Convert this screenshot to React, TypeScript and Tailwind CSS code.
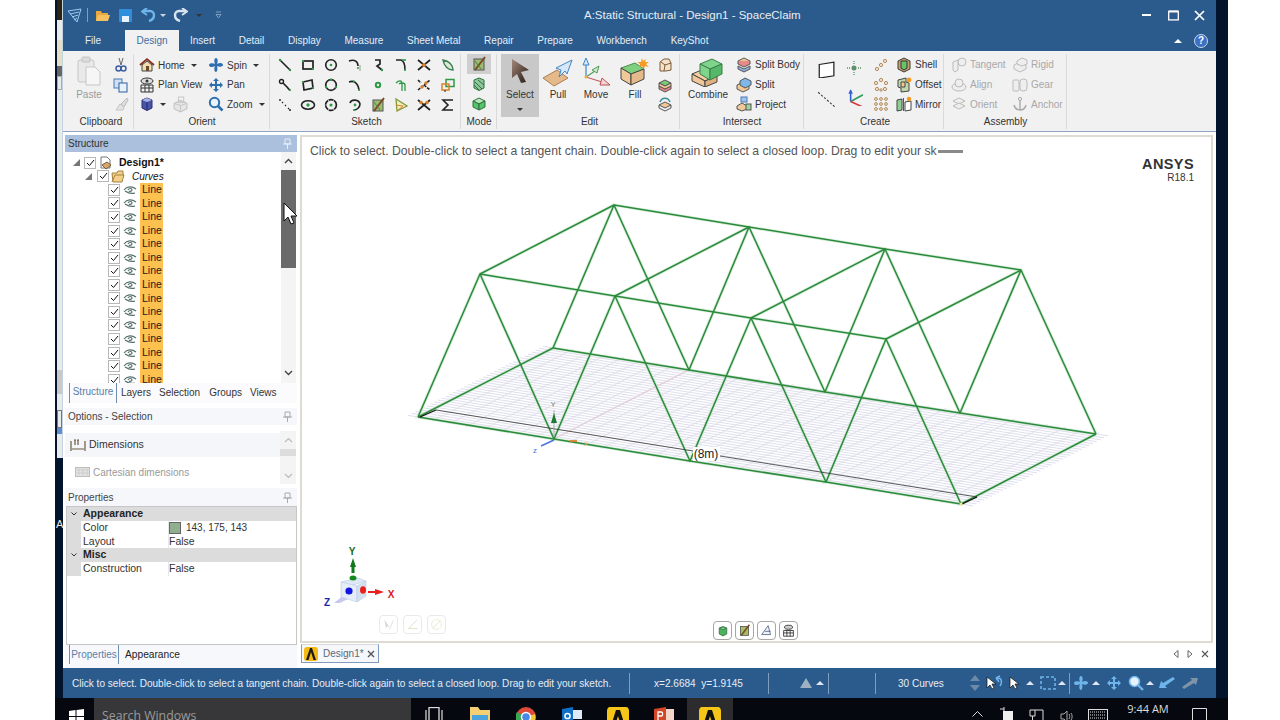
import React from 'react';

const K = '#222';
const G = '#2f9a46';
const O = '#d9822b';

const Ico: React.FC<{ s?: number; className?: string; children: React.ReactNode }> = ({ s = 16, className, children }) => (
  <svg width={s} height={s} viewBox="0 0 16 16" fill="none" className={`shrink-0 ${className ?? ''}`}>{children}</svg>
);

const CaretDown: React.FC<{ className?: string }> = ({ className }) => (
  <span className={`inline-block w-0 h-0 border-x-[3px] border-x-transparent border-t-[3px] border-t-[#333] ${className ?? ''}`} />
);

const CaretUp: React.FC<{ className?: string }> = ({ className }) => (
  <span className={`inline-block w-0 h-0 border-x-[4px] border-x-transparent border-b-[4px] border-b-[#dfe8f2] ${className ?? ''}`} />
);

const Group: React.FC<{ label: string; className: string; labelClass?: string; children: React.ReactNode }> = ({ label, className, labelClass, children }) => (
  <div className={`relative flex flex-col h-full shrink-0 ${className}`}>
    <div className="flex-1 min-h-0 flex pt-[1px]">{children}</div>
    <div className={`h-[17px] text-center text-[10px] leading-[16px] text-[#333] ${labelClass ?? ''}`}>{label}</div>
    <div className="absolute right-0 top-[3px] bottom-[2px] w-px bg-[#dadada]" />
  </div>
);

const sketchIcons: React.ReactNode[] = [
  <><path d="M3 3L13 13" stroke={K} strokeWidth="1.6" /><circle cx="3" cy="3" r="1.2" fill={G} /><circle cx="13" cy="13" r="1.2" fill={G} /></>,
  <><rect x="3" y="4" width="10" height="8" stroke={K} strokeWidth="1.7" /><rect x="2" y="3" width="2" height="2" fill={G} /><rect x="12" y="11" width="2" height="2" fill={G} /></>,
  <><circle cx="8" cy="8" r="5.3" stroke={K} strokeWidth="1.6" /><circle cx="8" cy="8" r="1.3" fill={G} /></>,
  <><path d="M2 4C7 2 11 4 11 9" stroke={K} strokeWidth="1.6" /><path d="M13 8V14" stroke="#999" /><circle cx="11" cy="11" r="1.1" fill={G} /></>,
  <><path d="M5 3H10V7L7 9L12 13" stroke={K} strokeWidth="1.7" /><circle cx="12" cy="13" r="1.2" fill={G} /></>,
  <><path d="M3 3H8C11 4 12 8 12 13" stroke={K} strokeWidth="1.5" /><path d="M9 3H13" stroke={G} strokeWidth="1.6" /><circle cx="12" cy="13" r="1.1" fill={G} /></>,
  <><path d="M2 3L14 13M2 13L14 3" stroke={K} strokeWidth="1.7" /><circle cx="8" cy="8" r="2" fill={O} /></>,
  <><path d="M3 3C4 9 8 13 13 13C13 8 9 4 3 3Z" stroke="#3f7f52" strokeWidth="1.5" fill="#dbe9d8" /></>,
  <><circle cx="4.5" cy="4.5" r="2" stroke={K} strokeWidth="1.4" /><path d="M6 6L10 10C12 12 12 13 13 13" stroke={K} strokeWidth="1.7" /><circle cx="13" cy="13" r="1.1" fill={G} /></>,
  <><path d="M3 5L12 3L13 11L4 13Z" stroke={K} strokeWidth="1.7" /><circle cx="3" cy="5" r="1.1" fill={G} /><circle cx="13" cy="11" r="1.1" fill={G} /></>,
  <><circle cx="8" cy="8" r="5.3" stroke={K} strokeWidth="1.7" /><circle cx="8" cy="2.7" r="1.2" fill={G} /><circle cx="3" cy="10" r="1.2" fill={G} /><circle cx="13" cy="10" r="1.2" fill={G} /></>,
  <><path d="M2 5C7 3 11 6 12 13" stroke={K} strokeWidth="1.7" /><circle cx="7" cy="4.5" r="1.1" fill={G} /><circle cx="12" cy="13" r="1.1" fill={G} /></>,
  <><circle cx="8" cy="8" r="2.2" stroke={G} strokeWidth="2" /></>,
  <><path d="M3 6C6 3 9 3 9 7V14M6 7C7 6 12 5 12 8V14" stroke={G} strokeWidth="1.3" /></>,
  <><path d="M2 3L5 6M8 8L14 13M2 13L14 3" stroke={K} strokeWidth="1.6" strokeDasharray="3 1" /><circle cx="6" cy="10" r="1.7" fill={O} /><circle cx="10" cy="6" r="1.7" fill={O} /></>,
  <><rect x="6" y="2.5" width="8" height="7" stroke={G} strokeWidth="1.5" /><rect x="2" y="7" width="7" height="6" stroke={O} strokeWidth="1.5" /><path d="M5 13V15" stroke={K} /></>,
  <><circle cx="3" cy="3" r=".9" fill={K} /><path d="M5 5L6 6M8 8L9 9M11 11L12 12" stroke={K} strokeWidth="1.2" /><circle cx="13" cy="13" r="1" fill={K} /></>,
  <><ellipse cx="8" cy="8" rx="6.5" ry="4.2" stroke={K} strokeWidth="1.6" /><circle cx="8" cy="8" r="1.7" fill={G} /></>,
  <><circle cx="8" cy="8" r="5.4" stroke={K} strokeWidth="1.7" strokeDasharray="5 .6" /><circle cx="8" cy="8" r="1.6" fill={G} /></>,
  <><path d="M3 6C4 2 12 2 13 7C13 11 9 13 7 13" stroke={K} strokeWidth="1.6" /><circle cx="8" cy="8" r="1.4" fill={G} /><circle cx="7" cy="13" r="1" fill={G} /></>,
  <><rect x="3" y="3" width="10" height="11" fill="#9bbd73" stroke="#555" /><path d="M14 1L4 14" stroke="#7a4a26" strokeWidth="2" /><path d="M4 5L10 13" stroke="#5c7c40" /></>,
  <><path d="M3 2L14 9L4 14Z" stroke="#7f9a3a" strokeWidth="1.3" fill="#f4edc2" /><path d="M3 8L10 9L4 14" stroke={O} /></>,
  <><path d="M2 3L14 13M2 13L14 3" stroke={K} strokeWidth="1.7" /><circle cx="5" cy="5.5" r="1.8" fill={O} /><circle cx="11" cy="5.5" r="1.8" fill={O} /></>,
  <><path d="M13 3H3L8 8L3 13H13" stroke={K} strokeWidth="1.6" /></>,
];

const Paste = () => (
  <svg width="24" height="30" viewBox="0 0 24 30" fill="none">
    <rect x="1" y="4" width="16" height="22" rx="2" fill="#e9e9e9" stroke="#c6c6c6" />
    <rect x="5" y="1" width="8" height="5" rx="1" fill="#dcdcdc" stroke="#c2c2c2" />
    <path d="M9 11H18L23 16V29H9Z" fill="#f6f6f6" stroke="#c6c6c6" />
  </svg>
);

const SelectArrow = () => (
  <svg width="24" height="26" viewBox="0 0 24 26">
    <defs>
      <linearGradient id="selArrow" x1="0" y1="0" x2="1" y2="1">
        <stop offset="0" stopColor="#a4887a" />
        <stop offset="1" stopColor="#241812" />
      </linearGradient>
    </defs>
    <path d="M4 1L21 12L13 14L18 24L13 25L9 16L4 20Z" fill="url(#selArrow)" />
  </svg>
);

const PullIcon = () => (
  <svg width="32" height="28" viewBox="0 0 32 28" fill="none">
    <path d="M1 19L15 11L26 19L12 27Z" fill="#e6b98a" stroke="#a97d52" />
    <path d="M30 1L14 9L19 11L17 18L23 12L25 15Z" fill="#d7e7f7" stroke="#3f86c8" />
  </svg>
);

const MoveIcon = () => (
  <svg width="32" height="30" viewBox="0 0 32 30" fill="none">
    <path d="M6 20V5" stroke="#3f86c8" strokeWidth="1.2" />
    <path d="M6 1L9 8H3Z" fill="#d7e7f7" stroke="#3f86c8" />
    <path d="M6 20L18 12" stroke="#4d9d58" strokeWidth="1.2" />
    <path d="M19 9L17 16L12 13Z" fill="#cfe9cf" stroke="#4d9d58" />
    <path d="M6 20L22 25" stroke="#c05050" />
    <path d="M30 28L20 28L22 21Z" fill="#f4d5d5" stroke="#c05050" />
    <circle cx="6" cy="20" r="1.6" fill="#e8b04a" />
  </svg>
);

const FillIcon = () => (
  <svg width="30" height="28" viewBox="0 0 30 28" fill="none">
    <path d="M1 10L15 5L24 11L11 16Z" fill="#7fcf7f" stroke="#4d8c4d" />
    <path d="M1 10V21L11 27V16Z" fill="#f0c898" stroke="#444" />
    <path d="M11 16V27L24 21V11Z" fill="#e6b98a" stroke="#444" />
    <path d="M22 0L23 3L26 1L25 4L29 4L26 6L29 9L25 8L24 11L22 8L19 9L20 6L17 4L21 4Z" fill="#f59a23" />
  </svg>
);

const CombineIcon = () => (
  <svg width="34" height="30" viewBox="0 0 34 30" fill="none">
    <path d="M1 17L13 12L26 19L14 24Z" fill="#f2cda2" stroke="#444" />
    <path d="M1 17V24L14 30V24Z" fill="#f0c898" stroke="#444" />
    <path d="M14 24V30L26 25V19Z" fill="#e0b080" stroke="#444" />
    <path d="M9 7L21 2L31 7L19 12Z" fill="#7fd48c" stroke="#3e7d4a" />
    <path d="M9 7V17L19 23V12Z" fill="#7fd48c" stroke="#3e7d4a" />
    <path d="M19 12V23L31 17V7Z" fill="#55b869" stroke="#3e7d4a" />
  </svg>
);

const SmallText: React.FC<{ icon: React.ReactNode; label: string; muted?: boolean; className?: string }> = ({ icon, label, muted, className }) => (
  <div className={`h-5 flex items-center ${className ?? ''}`}>
    <span className="w-[16px] h-[16px] flex items-center justify-center shrink-0">{icon}</span>
    <span className={`ml-[3px] text-[10px] whitespace-nowrap ${muted ? 'text-[#a8a8a8]' : 'text-[#333]'}`}>{label}</span>
  </div>
);

const Box = (top: string, side: string, stroke = '#444') => (
  <Ico>
    <path d="M2 5L8 2L14 5L8 8Z" fill={top} stroke={stroke} />
    <path d="M2 5V11L8 14V8Z" fill={side} stroke={stroke} />
    <path d="M8 8V14L14 11V5Z" fill={side} stroke={stroke} />
  </Ico>
);

const Ribbon = () => (
  <div className="h-[81px] bg-[#f1f1f1] flex border-b border-b-[#8ea5c3] shrink-0">
    <Group label="Clipboard" className="w-[71px]" labelClass="pl-[5px]">
      <div className="w-[50px] flex flex-col items-center pt-[4px] pl-[2px]">
        <Paste />
        <span className="mt-[1px] text-[10px] text-[#9a9a9a]">Paste</span>
      </div>
      <div className="flex flex-col pt-[3px]">
        <div className="h-5 flex items-center"><Ico><path d="M6 1L8 8M10 1L8 8" stroke="#666" /><circle cx="5.5" cy="11.5" r="2.5" stroke="#3b5fa0" strokeWidth="1.5" /><circle cx="10.5" cy="11.5" r="2.5" stroke="#3b5fa0" strokeWidth="1.5" /></Ico></div>
        <div className="h-5 flex items-center"><Ico><rect x="1" y="2" width="8" height="9" fill="#cfe0f5" stroke="#4d79b5" /><rect x="6" y="6" width="8" height="9" fill="#e8f0fa" stroke="#2f5f9f" /></Ico></div>
        <div className="h-5 flex items-center"><Ico><path d="M14 2L8 8L11 11L15 4Z" fill="#ddd" stroke="#bbb" /><path d="M7 8L3 14H10L11 11Z" fill="#e3e3e3" stroke="#c4c4c4" /></Ico></div>
      </div>
    </Group>
    <Group label="Orient" className="w-[136px]">
      <div className="w-[74px] pl-[5px] pt-[3px] flex flex-col">
        <div className="flex items-center"><SmallText label="Home" icon={<Ico><path d="M1 8L8 2L15 8" stroke="#8a2f1e" strokeWidth="1.7" /><path d="M3 8V14H13V8L8 4Z" fill="#f3ddb0" stroke="#444" /><rect x="7" y="9" width="3" height="5" fill="#6b4a2a" /></Ico>} /><CaretDown className="ml-[6px]" /></div>
        <SmallText label="Plan View" icon={<Ico><ellipse cx="8" cy="4" rx="6" ry="3" fill="#dcdcdc" stroke="#333" /><circle cx="8" cy="4" r="1.5" fill="#333" /><path d="M2 8H14V15H2ZM2 11H14M6 8V15M10 8V15" stroke="#333" /></Ico>} />
        <div className="h-5 flex items-center">
          <Ico><path d="M3 4L8 2L13 4V12L8 14.5L3 12Z" fill="#4a55a8" stroke="#2a2f70" /><path d="M3 4L8 6L13 4L8 2Z" fill="#a8b3e8" /><path d="M8 6V14" stroke="#222a66" /></Ico>
          <CaretDown className="ml-[5px]" />
          <Ico s={17} className="ml-[6px]"><path d="M2 7L8 4L14 7V12L8 15L2 12Z" fill="#e6e6e6" stroke="#c2c2c2" /><path d="M6 1H11V6H6Z" stroke="#c8c8c8" /><path d="M8 9V15M2 7L8 9L14 7" stroke="#c8c8c8" /></Ico>
        </div>
      </div>
      <div className="pt-[3px] flex flex-col">
        <div className="flex items-center"><SmallText label="Spin" icon={<Ico><path d="M8 1C10 1 10 5 9 7C12 5 15 6 15 8C15 10 11 10 9 9C10 12 9 15 8 15C6 15 6 11 7 9C4 11 1 10 1 8C1 6 5 6 7 7C6 5 6 1 8 1Z" fill="#2f6fb0" /></Ico>} /><CaretDown className="ml-[6px]" /></div>
        <SmallText label="Pan" icon={<Ico><path d="M8 1L11 4H9V7H12V5L15 8L12 11V9H9V12H11L8 15L5 12H7V9H4V11L1 8L4 5V7H7V4H5Z" fill="#2f6fb0" /></Ico>} />
        <div className="flex items-center"><SmallText label="Zoom" icon={<Ico><circle cx="6.5" cy="6.5" r="4.7" fill="#e9f3fc" stroke="#2f6fb0" strokeWidth="2" /><path d="M10 10L14.5 14.5" stroke="#2f6fb0" strokeWidth="2.6" /></Ico>} /><CaretDown className="ml-[6px]" /></div>
      </div>
    </Group>
    <Group label="Sketch" className="w-[191px]" labelClass="pl-[2px]">
      <div className="pl-[3px] pt-[3px] grid grid-cols-[repeat(8,23.3px)] grid-rows-[repeat(3,20px)]">
        {sketchIcons.map((ic, i) => (
          <span key={i} className="flex items-center justify-center"><Ico>{ic}</Ico></span>
        ))}
      </div>
    </Group>
    <Group label="Mode" className="w-[36px]">
      <div className="w-full flex flex-col items-center pt-[2px]">
        <div className="h-5 w-6 bg-[#cfcfcf] flex items-center justify-center"><Ico>{sketchIcons[20]}</Ico></div>
        <div className="h-5 flex items-center"><Ico><path d="M3 4L8 2L13 4V12L8 14.5L3 12Z" fill="#8fc79a" stroke="#2f6f42" /><path d="M4 6L11 13M7 4L13 9M3 9L8 14" stroke="#2f6f42" /></Ico></div>
        <div className="h-5 flex items-center">{Box('#b6e6b6', '#55c46a', '#2f6f42')}</div>
      </div>
    </Group>
    <Group label="Edit" className="w-[183px]" labelClass="pl-[2px]">
      <div className="ml-[4px] mt-[2px] w-[38px] h-[63px] bg-[#c8c8c8] flex flex-col items-center pt-[4px]">
        <SelectArrow />
        <span className="mt-[3px] text-[10px] text-[#333]">Select</span>
        <CaretDown className="mt-[6px]" />
      </div>
      <div className="w-[38px] flex flex-col items-center pt-[7px]">
        <PullIcon />
        <span className="mt-[0px] text-[10px] text-[#333]">Pull</span>
      </div>
      <div className="w-[38px] flex flex-col items-center pt-[5px]">
        <MoveIcon />
        <span className="mt-[0px] text-[10px] text-[#333]">Move</span>
      </div>
      <div className="w-[40px] flex flex-col items-center pt-[6px]">
        <FillIcon />
        <span className="mt-[1px] text-[10px] text-[#333]">Fill</span>
      </div>
      <div className="ml-[2px] pt-[3px] flex flex-col">
        <div className="h-5 flex items-center"><Ico><path d="M3 5L7 2H12L14 6V13L9 14H3Z" fill="#f4e2c8" stroke="#7a5a3a" /><path d="M8 8L7 14M8 8L14 6M8 8L4 5" stroke="#7a5a3a" /></Ico></div>
        <div className="h-5 flex items-center"><Ico><path d="M2 6L8 3L14 6L8 9Z" fill="#79c979" stroke="#555" /><path d="M2 9L8 12L14 9V12L8 15L2 12Z" fill="#e98a8a" stroke="#555" /><path d="M2 6V9L8 12L14 9V6L8 9Z" fill="#f0c898" stroke="#555" /></Ico></div>
        <div className="h-5 flex items-center"><Ico><path d="M2 9L8 6L14 9L8 12Z" fill="#f0c898" stroke="#555" /><path d="M2 9V12L8 15L14 12V9" stroke="#555" /><path d="M3 6C5 1 11 1 13 6" stroke="#3d8f9a" strokeWidth="1.6" /></Ico></div>
      </div>
    </Group>
    <Group label="Intersect" className="w-[124px]">
      <div className="w-[54px] flex flex-col items-center pt-[5px] pl-[2px]">
        <CombineIcon />
        <span className="text-[10px] text-[#333]">Combine</span>
      </div>
      <div className="pl-[2px] pt-[3px] flex flex-col">
        <SmallText label="Split Body" icon={<Ico><path d="M2 4L8 1L14 4L8 7Z" fill="#f0c898" stroke="#555" /><path d="M2 4V7L8 10L14 7V4" fill="#e98a8a" stroke="#555" /><path d="M2 9L8 12L14 9V12L8 15L2 12Z" fill="#8fb0dd" stroke="#555" /></Ico>} />
        <SmallText label="Split" icon={<Ico><path d="M1 8L7 5L13 8V12L7 15L1 12Z" fill="#f0c898" stroke="#555" /><path d="M4 4L9 1L15 4L15 8L9 11L4 8Z" fill="#7fb8e8" stroke="#555" /></Ico>} />
        <SmallText label="Project" icon={<Ico><path d="M1 10L6 7L11 10V13L6 15L1 13Z" fill="#f0c898" stroke="#555" /><rect x="5" y="1" width="6" height="5" fill="#9ec4ec" stroke="#4d79b5" /><rect x="10" y="8" width="5" height="6" fill="#9fd49f" stroke="#555" /></Ico>} />
      </div>
    </Group>
    <Group label="Create" className="w-[140px]" labelClass="pl-[2px]">
      <div className="w-[40px] flex flex-col items-center pt-[8px] pl-[4px]">
        <Ico s={18}><path d="M2 4L15 2V14L2 16Z" fill="#fff" stroke="#222" strokeWidth="1.1" /></Ico>
        <Ico s={18} className="mt-[12px]"><path d="M1 2L17 16" stroke="#444" strokeWidth="1" strokeDasharray="2 1.5" /></Ico>
      </div>
      <div className="w-[20px] flex flex-col items-center pt-[8px]">
        <Ico><circle cx="8" cy="8" r="2.5" fill="#5d8f6a" /><path d="M8 1V4M8 12V15M1 8H4M12 8H15" stroke="#5d8f6a" strokeWidth="1.3" strokeDasharray="1 1" /></Ico>
        <Ico s={18} className="mt-[12px]"><path d="M5 12V2" stroke="#2f5fd0" strokeWidth="1.4" /><path d="M5 1L7 5H3Z" fill="#2f5fd0" /><path d="M5 12L16 6" stroke="#2f9a5c" strokeWidth="1.4" /><path d="M5 12L16 17" stroke="#d03a3a" strokeWidth="1.4" /></Ico>
      </div>
      <div className="w-[32px] flex flex-col items-center pt-[3px] pl-[1px]">
        <div className="h-5 flex items-center"><Ico><g stroke="#b08a5e" fill="#f4ead8"><circle cx="4" cy="12" r="1.6" /><circle cx="8" cy="8" r="1.6" /><circle cx="12" cy="4" r="1.6" /></g></Ico></div>
        <div className="h-5 flex items-center"><Ico><g stroke="#b08a5e" fill="#f4ead8"><circle cx="8" cy="3" r="1.6" /><circle cx="3" cy="6" r="1.6" /><circle cx="13" cy="6" r="1.6" /><circle cx="4" cy="12" r="1.6" /><circle cx="12" cy="12" r="1.6" /><circle cx="8" cy="13" r="1.2" /></g></Ico></div>
        <div className="h-5 flex items-center"><Ico><g stroke="#b08a5e" fill="#f4ead8"><circle cx="3" cy="3" r="1.4" /><circle cx="8" cy="3" r="1.4" /><circle cx="13" cy="3" r="1.4" /><circle cx="3" cy="8" r="1.4" /><circle cx="8" cy="8" r="1.4" /><circle cx="13" cy="8" r="1.4" /><circle cx="3" cy="13" r="1.4" /><circle cx="8" cy="13" r="1.4" /><circle cx="13" cy="13" r="1.4" /></g></Ico></div>
      </div>
      <div className="pt-[3px] flex flex-col">
        <SmallText label="Shell" icon={<Ico><path d="M2 4L8 1L14 4V12L8 15L2 12Z" fill="#c9a26a" stroke="#3a3a3a" /><path d="M5 4H11V11L8 13L5 11Z" fill="#66c46a" stroke="#333" /></Ico>} />
        <SmallText label="Offset" icon={<Ico><path d="M2 3L10 1V5L13 6V14L5 15V11L2 10Z" fill="#c2d8a8" stroke="#444" /><path d="M5 5H9V10H5Z" fill="#f0c898" stroke="#444" /><circle cx="13" cy="3" r="2.4" fill="#f59a23" /></Ico>} />
        <SmallText label="Mirror" icon={<Ico><path d="M1 4L6 3V14L1 15Z" fill="#8fcf8f" stroke="#444" /><path d="M9 6L15 5V14L9 15Z" fill="#fff" stroke="#444" /><path d="M7.5 2V15" stroke="#555" /><circle cx="13" cy="3" r="2.2" fill="#f59a23" /></Ico>} />
      </div>
    </Group>
    <Group label="Assembly" className="w-[123px]">
      <div className="w-[68px] pl-[7px] pt-[3px] flex flex-col">
        <SmallText muted label="Tangent" icon={<Ico><circle cx="11" cy="5" r="4" stroke="#bbb" fill="#eee" /><path d="M2 5L7 3V13L4 15L2 13Z" fill="#eee" stroke="#bbb" /></Ico>} />
        <SmallText muted label="Align" icon={<Ico><ellipse cx="8" cy="10" rx="7" ry="4" fill="#eee" stroke="#bbb" /><ellipse cx="8" cy="6" rx="4" ry="4" fill="#eee" stroke="#bbb" /></Ico>} />
        <SmallText muted label="Orient" icon={<Ico><path d="M2 5L8 2L14 5L8 8Z" fill="#eee" stroke="#bbb" /><path d="M2 10L8 7L14 10L8 13Z" fill="#eee" stroke="#bbb" /></Ico>} />
      </div>
      <div className="pt-[3px] flex flex-col">
        <SmallText muted label="Rigid" icon={<Ico><path d="M2 8L8 5L14 8V12L8 15L2 12Z" fill="#eee" stroke="#bbb" /><path d="M5 4L10 1L15 3V7L10 9L5 7Z" fill="#eee" stroke="#bbb" /></Ico>} />
        <SmallText muted label="Gear" icon={<Ico><rect x="1" y="3" width="6" height="11" rx="1" fill="#eee" stroke="#bbb" /><rect x="8" y="2" width="7" height="12" rx="3" fill="#eee" stroke="#bbb" /></Ico>} />
        <SmallText muted label="Anchor" icon={<Ico><circle cx="8" cy="3" r="1.6" stroke="#aaa" /><path d="M8 5V14M2 9C3 13 6 14 8 14C10 14 13 13 14 9" stroke="#aaa" strokeWidth="1.4" /></Ico>} />
      </div>
    </Group>
  </div>
);

const Check: React.FC<{ className?: string }> = ({ className }) => (
  <span className={`w-[12px] h-[12px] border border-[#b8b8b8] bg-white flex items-center justify-center shrink-0 ${className ?? ''}`}>
    <svg width="9" height="8" viewBox="0 0 9 8" fill="none"><path d="M1 4L3.5 6.5L8 1" stroke="#111" strokeWidth="1" /></svg>
  </span>
);

const TreeTri: React.FC<{ className?: string }> = ({ className }) => (
  <svg width="7" height="7" viewBox="0 0 7 7" className={`shrink-0 ${className ?? ''}`}><path d="M7 0V7H0Z" fill="#777" /></svg>
);

const Pin = () => (
  <svg width="9" height="11" viewBox="0 0 9 11" fill="none" className="shrink-0"><path d="M2 1H7V6H2ZM0 6H9M4.5 6V11" stroke="currentColor" /></svg>
);

const Eye = () => (
  <svg width="14" height="10" viewBox="0 0 14 10" fill="none" className="shrink-0"><path d="M1 5C4 1 9 1 13 4M2 6C5 8 9 9 12 8" stroke="#55706c" strokeWidth="1.2" /><path d="M5 5C6 3 9 3 9 5C9 6 7 7 6 6" stroke="#55706c" strokeWidth="1.2" /></svg>
);

const Tree = () => (
  <div className="h-[231px] flex bg-white">
    <div className="flex-1 overflow-hidden pt-[4px]">
      <div className="h-[13.5px] flex items-center pl-[8px]">
        <TreeTri />
        <Check className="ml-[4px]" />
        <svg width="14" height="14" viewBox="0 0 14 14" fill="none" className="ml-[3px] shrink-0"><path d="M2 1H8L11 4V12H2Z" fill="#fff" stroke="#777" /><path d="M3 9L8 6L12 9L7 13Z" fill="#d9a86c" stroke="#7a5a3a" /></svg>
        <span className="ml-[6px] text-[10.5px] font-bold text-[#111]">Design1*</span>
      </div>
      <div className="h-[13.57px] flex items-center pl-[20px]">
        <TreeTri />
        <Check className="ml-[5px]" />
        <svg width="14" height="13" viewBox="0 0 14 13" fill="none" className="ml-[2px] shrink-0"><path d="M1 3H6L7 1H12V5H13L11 12H2Z" fill="#f4cf8c" stroke="#a5843f" /><path d="M1 12L4 5H13" stroke="#a5843f" /></svg>
        <span className="ml-[7px] text-[10px] italic text-[#111]">Curves</span>
      </div>
      {Array.from({ length: 15 }).map((_, i) => (
        <div key={i} className="h-[13.57px] flex items-center pl-[43px]">
          <Check />
          <span className="ml-[3px]"><Eye /></span>
          <span className="ml-[3px] w-[23px] h-full bg-[#fcc14f] pl-[2px] text-[10.5px] leading-[13.5px] text-[#222]">Line</span>
        </div>
      ))}
    </div>
    <div className="w-[15px] mr-[1px] flex flex-col bg-[#f4f4f4] shrink-0">
      <div className="h-[18px] flex items-center justify-center">
        <svg width="9" height="6" viewBox="0 0 9 6" fill="none"><path d="M1 5L4.5 1.5L8 5" stroke="#444" strokeWidth="1.4" /></svg>
      </div>
      <div className="h-[98px] bg-[#6a6a6a]" />
      <div className="flex-1" />
      <div className="h-[18px] mb-[1px] flex items-center justify-center">
        <svg width="9" height="6" viewBox="0 0 9 6" fill="none"><path d="M1 1L4.5 4.5L8 1" stroke="#444" strokeWidth="1.4" /></svg>
      </div>
    </div>
  </div>
);

const PropHead: React.FC<{ label: string }> = ({ label }) => (
  <div className="h-[14px] bg-[#dcdcdc] flex items-center font-bold text-[#222]">
    <svg width="6" height="4" viewBox="0 0 6 4" fill="none" className="ml-[4px]"><path d="M.5 .5L3 3L5.5 .5" stroke="#333" /></svg>
    <span className="ml-[6px]">{label}</span>
  </div>
);

const PropRow: React.FC<{ name: string; value: React.ReactNode }> = ({ name, value }) => (
  <div className="h-[13.5px] flex leading-[13px]">
    <span className="w-[14px] h-full bg-[#dcdcdc]" />
    <span className="w-[88px] pl-[2px] border-r border-r-[#e8e8e8] h-full">{name}</span>
    <span className="h-full">{value}</span>
  </div>
);

const LeftPanel = () => (
  <div className="w-[232px] ml-[2px] mt-[3px] flex flex-col shrink-0 text-[10.5px] relative">
    <div className="h-[17px] bg-[#aac0dc] flex items-center justify-between px-[3px] text-[10px] text-[#333]">
      <span>Structure</span>
      <span className="text-[#e8eef6] mr-[2px]"><Pin /></span>
    </div>
    <Tree />
    <div className="h-[20px] flex items-center pl-[4px] bg-[#fbfbfd] text-[10px] text-[#333]">
      <span className="w-[48px] h-[20px] text-center leading-[18px] border-x border-x-[#6f8eae] text-[#5a80a8]">Structure</span>
      <span className="ml-[4px] -mt-[1px]">Layers</span>
      <span className="ml-[8px] -mt-[1px]">Selection</span>
      <span className="ml-[9px] -mt-[1px]">Groups</span>
      <span className="ml-[8px] -mt-[1px]">Views</span>
    </div>
    <div className="h-[85px] bg-white flex flex-col">
      <div className="mt-[5px] h-[17px] bg-[#f6f7fa] flex items-center justify-between pl-[3px] pr-[5px] text-[10px] text-[#444]">
        <span>Options - Selection</span>
        <span className="text-[#aaa]"><Pin /></span>
      </div>
      <div className="flex flex-1 min-h-0 mt-[6px]">
        <div className="flex-1">
          <div className="h-[24px] mt-[2px] bg-[#f5f6f9] flex items-center pl-[5px] text-[#333]">
            <svg width="16" height="14" viewBox="0 0 16 14" fill="none"><path d="M1 3V13M15 3V13M2 11H14M5 2V7M8 2V7M4 2H6M7 2H9" stroke="#6a5a40" strokeWidth="1.2" /></svg>
            <span className="ml-[3px]">Dimensions</span>
          </div>
          <div className="h-[24px] mt-[3px] flex items-center pl-[10px] text-[10px] text-[#9a9a9a]">
            <svg width="15" height="10" viewBox="0 0 15 10" fill="none"><rect x=".5" y=".5" width="14" height="9" fill="#e4e4e4" stroke="#bbb" /><path d="M0 3H15M0 6H15M4 0V10M8 0V10M12 0V10" stroke="#cdcdcd" /></svg>
            <span className="ml-[3px]">Cartesian dimensions</span>
          </div>
        </div>
        <div className="w-[16px] mr-[1px] mb-[4px] bg-[#f4f4f4] flex flex-col">
          <div className="h-[18px] flex items-center justify-center"><svg width="9" height="6" viewBox="0 0 9 6" fill="none"><path d="M1 5L4.5 1.5L8 5" stroke="#bbb" strokeWidth="1.2" /></svg></div>
          <div className="h-[7px] bg-[#dcdcdc]" />
          <div className="flex-1" />
          <div className="h-[16px] flex items-center justify-center"><svg width="9" height="6" viewBox="0 0 9 6" fill="none"><path d="M1 1L4.5 4.5L8 1" stroke="#bbb" strokeWidth="1.2" /></svg></div>
        </div>
      </div>
    </div>
    <div className="h-[18px] bg-[#f6f7fa] flex items-center justify-between pl-[3px] pr-[5px] text-[10px] text-[#444]">
      <span>Properties</span>
      <span className="text-[#aaa]"><Pin /></span>
    </div>
    <div className="h-[139px] border border-[#c6c6c6] ml-[1px] bg-white text-[#333]">
      <PropHead label="Appearance" />
      <PropRow name="Color" value={<span className="flex items-center h-full text-[10px]"><span className="w-[12px] h-[12px] bg-[#8faf8f] border border-[#666] mr-[5px]" />143, 175, 143</span>} />
      <PropRow name="Layout" value="False" />
      <PropHead label="Misc" />
      <PropRow name="Construction" value="False" />
    </div>
    <div className="h-[23px] flex items-start pl-[4px] bg-[#f7f8fc] text-[10.2px] text-[#333]">
      <span className="w-[50px] h-[19px] text-center text-[10px] leading-[19px] border-x border-x-[#6f8eae] text-[#5a80a8]">Properties</span>
      <span className="ml-[6px] leading-[19px] text-[#222]">Appearance</span>
    </div>
    {/* mouse pointer sitting on the tree scrollbar */}
    <svg width="16" height="24" viewBox="0 0 16 24" className="absolute left-[218px] top-[67px]">
      <path d="M1 1V19L5 15L8 22L11 21L8 14H14Z" fill="#fff" stroke="#111" />
    </svg>
  </div>
);

const topBack = [[614, 205], [749, 227], [885, 249], [1021, 270]];
const topFront = [[480, 274], [615, 296], [751, 318], [886, 339]];
const botBack = [[553, 348], [689, 370], [825, 392], [960, 413], [1096, 434]];
const botFront = [[418, 417], [554, 439], [690, 461], [826, 482], [961, 504]];

const poly = (p: number[][]) => p.map(q => q.join(',')).join(' ');
const weave = (bot: number[][], top: number[][]) => {
  const out: number[][] = [];
  bot.forEach((b, i) => {
    out.push(b);
    if (top[i]) out.push(top[i]);
  });
  return out;
};
const lerp = (a: number[], b: number[], t: number) => [a[0] + (b[0] - a[0]) * t, a[1] + (b[1] - a[1]) * t];

const Truss = () => {
  const A = [418, 417], B = [553, 348], C = [1096, 434], D = [961, 504];
  const long = Array.from({ length: 37 }, (_, i) => i / 36);
  const cross = Array.from({ length: 33 }, (_, i) => i / 32);
  const members: number[][][] = [
    topBack, topFront, botBack, botFront,
    weave(botFront, topFront), weave(botBack, topBack),
    [topFront[0], topBack[0]], [topFront[1], topBack[1]], [topFront[2], topBack[2]], [topFront[3], topBack[3]],
    [botFront[0], botBack[0]], [botFront[4], botBack[4]],
  ];
  return (
    <svg className="absolute inset-0" width="913" height="508" viewBox="300 135 913 508" fill="none">
      <g stroke="#d6d6ea" strokeWidth=".8">
        {long.map(t => {
          const p = lerp(A, B, t), q = lerp(D, C, t);
          return <line key={t} x1={p[0] - 10} y1={p[1] - 1.6} x2={q[0] + 12} y2={q[1] + 1.9} />;
        })}
      </g>
      <g stroke="#d8d9e2" strokeWidth=".7">
        {cross.map(t => {
          const p = lerp(A, D, t), q = lerp(B, C, t);
          return <line key={t} x1={p[0] - 3} y1={p[1] + 1.5} x2={q[0] + 3} y2={q[1] - 1.5} />;
        })}
      </g>
      <path d="M554 439L689 370" stroke="#e2c4c8" strokeWidth=".8" />
      <g strokeLinejoin="round">
        {members.map((m, i) => <polyline key={`h${i}`} points={poly(m)} stroke="#bfe3c4" strokeWidth="3.2" opacity=".6" />)}
        {members.map((m, i) => <polyline key={i} points={poly(m)} stroke="#2b8a3b" strokeWidth="1.5" />)}
      </g>
      <path d="M436 410L693 451M720 456L977 497" stroke="#333" strokeWidth=".8" />
      <path d="M420 417L436 410M962 504L977 497" stroke="#111" strokeWidth="1.3" />
      <path d="M554 410V437" stroke="#999" strokeWidth=".8" />
      <path d="M554 413L557 423H551Z" fill="#1f7a33" />
      <path d="M554 440L541 446" stroke="#4a78d8" strokeWidth="1.6" />
      <path d="M570 441H577" stroke="#d9822b" strokeWidth="1.8" />
      <circle cx="961" cy="504" r="1.6" fill="#f1e58a" />
      <text x="553" y="407" fontSize="7" textAnchor="middle" fill="#6a7a6a" fontFamily="Liberation Sans">Y</text>
      <text x="535" y="453" fontSize="8" textAnchor="middle" fill="#5a70c8" fontFamily="Liberation Sans">z</text>
      <text x="586" y="446" fontSize="7" textAnchor="middle" fill="#e3b18a" fontFamily="Liberation Sans">x</text>
      <rect x="693" y="447" width="27" height="14" fill="#fff" />
      <text x="706" y="458" fontSize="12" textAnchor="middle" fill="#222" fontFamily="Liberation Sans">(8m)</text>
      {/* triad */}
      <path d="M334 603L345 594L350 598L340 603Z" fill="#c9c8ee" />
      <path d="M341 582L358 578L366 581L350 586Z" fill="#dfe9f5" stroke="#b8cbe0" strokeWidth=".6" />
      <path d="M341 582V597L357 602V586Z" fill="#e4edf8" stroke="#b8cbe0" strokeWidth=".6" />
      <path d="M357 586L366 581V596L357 602Z" fill="#d2e0f0" stroke="#b8cbe0" strokeWidth=".6" />
      <ellipse cx="353" cy="578" rx="3.5" ry="2.5" fill="#138a20" />
      <circle cx="349" cy="591" r="3.6" fill="#1414e0" />
      <ellipse cx="363" cy="590" rx="3" ry="3.8" fill="#e8201c" />
      <path d="M353 558L356 567H354.5V573H351.5V567H350Z" fill="#0f7a1c" />
      <path d="M384 592L375 589V591H368V593H375V595Z" fill="#e8201c" />
      <text x="352" y="555" fontSize="10" fontWeight="bold" textAnchor="middle" fill="#166a24" fontFamily="Liberation Sans">Y</text>
      <text x="391" y="598" fontSize="10" fontWeight="bold" textAnchor="middle" fill="#d8201c" fontFamily="Liberation Sans">X</text>
      <text x="327" y="606" fontSize="10" fontWeight="bold" textAnchor="middle" fill="#1c2aa8" fontFamily="Liberation Sans">Z</text>
    </svg>
  );
};

const ViewBtn: React.FC<{ children: React.ReactNode; faded?: boolean }> = ({ children, faded }) => (
  <span className={`w-[19px] h-[19px] rounded-[4px] border flex items-center justify-center ${faded ? 'border-[#dcdcdc] opacity-60' : 'border-[#a6a6a6] bg-white'}`}>
    {children}
  </span>
);

const Viewport = () => (
  <div className="w-[913px] h-[508px] relative bg-white border-2 border-[#dedcd2] overflow-hidden">
    <div className="absolute -top-[2px] -left-[2px] w-[913px] h-[508px]"><Truss /></div>
    <div className="absolute left-[8px] top-[5px] text-[12.2px] text-[#555] whitespace-nowrap flex items-center">
      <span>Click to select. Double-click to select a tangent chain. Double-click again to select a closed loop. Drag to edit your sk</span>
      <span className="w-[25px] h-[3px] bg-[#8a8a8a] ml-[1px]" />
    </div>
    <div className="absolute right-[17px] top-[20px] text-right text-[#333] leading-none">
      <div className="text-[14.5px] font-bold tracking-[0.4px]">ANSYS</div>
      <div className="text-[10px] mt-[1px]">R18.1</div>
    </div>
    <div className="absolute left-[77px] top-[478px] flex gap-[5px]">
      <ViewBtn faded><Ico s={13}><path d="M3 2L9 11L6 10L5 13Z" fill="#bbb" /><path d="M14 3L9 14" stroke="#c8c8a8" /></Ico></ViewBtn>
      <ViewBtn faded><Ico s={13}><path d="M14 2L3 13H14" stroke="#b9cf8c" /></Ico></ViewBtn>
      <ViewBtn faded><Ico s={13}><circle cx="8" cy="8" r="6" stroke="#b9cf8c" strokeDasharray="2 1" /><path d="M3 13L13 3" stroke="#d8c88c" /></Ico></ViewBtn>
    </div>
    <div className="absolute left-[411px] top-[484px] flex gap-[3px]">
      <ViewBtn><Ico s={12}><path d="M3 4L8 2L13 4V12L8 14.5L3 12Z" fill="#4cb35c" stroke="#2a6a3a" /><path d="M3 4L8 6L13 4" fill="#a6dcae" stroke="#2a6a3a" /></Ico></ViewBtn>
      <ViewBtn><Ico s={13}><rect x="3" y="3" width="10" height="11" fill="#a8bd63" stroke="#555" /><path d="M14 1L4 14" stroke="#7a4a26" strokeWidth="2" /></Ico></ViewBtn>
      <ViewBtn><Ico s={13}><path d="M2 13L10 2L13 13Z" fill="#eef2fa" stroke="#4d5f80" /><path d="M6 9H13" stroke="#4d5f80" /></Ico></ViewBtn>
      <ViewBtn><Ico s={13}><ellipse cx="8" cy="4" rx="5" ry="2.5" fill="#ccc" stroke="#222" /><path d="M2 8H14V15H2ZM2 11H14M6 8V15M10 8V15" stroke="#222" /></Ico></ViewBtn>
    </div>
  </div>
);

const TabStrip = () => (
  <div className="h-[23px] flex items-start bg-white mt-px relative">
    <div className="ml-[1px] w-[78px] h-[19px] border border-[#7f9cc0] border-t-[#d9d9d9] flex items-center bg-[#f5f7fb]">
      <svg width="14" height="15" viewBox="0 0 14 15" className="ml-[2px] shrink-0"><rect x="0" y="1" width="14" height="14" rx="3" fill="#f5b915" /><path d="M2 14L6 2H8L12 14H9.5L7 6L4.5 14Z" fill="#1a1a1a" /></svg>
      <span className="ml-[5px] text-[10px] text-[#5a6a7a]">Design1*</span>
      <svg width="8" height="8" viewBox="0 0 8 8" className="ml-[3px]"><path d="M1 1L7 7M7 1L1 7" stroke="#555" strokeWidth="1.4" /></svg>
    </div>
    <div className="ml-auto mr-[4px] h-[19px] flex items-center gap-[8px]">
      <svg width="6" height="8" viewBox="0 0 6 8" fill="none"><path d="M5 .5V7.5L1 4Z" stroke="#666" /></svg>
      <svg width="6" height="8" viewBox="0 0 6 8" fill="none"><path d="M1 .5V7.5L5 4Z" stroke="#666" /></svg>
      <svg width="8" height="8" viewBox="0 0 8 8" fill="none"><path d="M1 1L7 7M7 1L1 7" stroke="#555" strokeWidth="1.1" /></svg>
    </div>
  </div>
);

const BLUE = '#6fb4ea';

const StatusBar = () => (
  <div className="h-[30px] bg-[#2a5b8c] flex items-center text-[10.07px] text-[#e6edf5] shrink-0">
    <span className="ml-[9px] w-[557px] pt-[1px] whitespace-nowrap">Click to select. Double-click to select a tangent chain. Double-click again to select a closed loop. Drag to edit your sketch.</span>
    <span className="w-px h-[21px] bg-[#7f9fc0]" />
    <span className="w-[138px] pt-[1px] pl-[24px] whitespace-nowrap">x=2.6684&nbsp; y=1.9145</span>
    <span className="w-px h-[21px] bg-[#7f9fc0]" />
    <svg width="12" height="10" viewBox="0 0 12 10" className="ml-[31px]"><path d="M6 0L12 10H0Z" fill="#9fb0c2" /></svg>
    <CaretUp className="ml-[4px]" />
    <span className="w-px h-[21px] bg-[#7f9fc0] ml-[4px]" />
    <span className="w-px h-[21px] bg-[#7f9fc0] ml-[46px]" />
    <span className="ml-[22px] w-[47px] pt-[1px] whitespace-nowrap">30 Curves</span>
    <svg width="10" height="16" viewBox="0 0 10 16" className="ml-[25px]"><path d="M5 0L10 6H0ZM5 16L0 10H10Z" fill="#6f8aa8" /></svg>
    <svg width="18" height="16" viewBox="0 0 18 16" fill="none" className="ml-[6px]"><path d="M1 2V13L4 10L6 14L8 13L6 9H10Z" fill="#fff" stroke="#111" strokeWidth=".7" /><path d="M11 4C15 2 17 6 14 11M10 3L14 1M10 3L13 7" stroke={BLUE} strokeWidth="1.5" /></svg>
    <svg width="12" height="16" viewBox="0 0 12 16" className="ml-[5px]"><path d="M1 2V13L4 10L6 14L8 13L6 9H10Z" fill="#fff" stroke="#111" strokeWidth=".7" /></svg>
    <CaretUp className="ml-[5px]" />
    <svg width="16" height="14" viewBox="0 0 16 14" fill="none" className="ml-[6px]"><rect x="1" y="1" width="14" height="12" stroke={BLUE} strokeWidth="1.6" strokeDasharray="3 2" /></svg>
    <CaretUp className="ml-[2px]" />
    <span className="w-px h-[21px] bg-[#7f9fc0] ml-[3px]" />
    <svg width="16" height="16" viewBox="0 0 16 16" className="ml-[3px]"><path d="M8 1C10 1 10 5 9 7C12 5 15 6 15 8C15 10 11 10 9 9C10 12 9 15 8 15C6 15 6 11 7 9C4 11 1 10 1 8C1 6 5 6 7 7C6 5 6 1 8 1Z" fill={BLUE} /></svg>
    <CaretUp className="ml-[3px]" />
    <svg width="16" height="16" viewBox="0 0 16 16" className="ml-[6px]"><path d="M8 1L11 4H9V7H12V5L15 8L12 11V9H9V12H11L8 15L5 12H7V9H4V11L1 8L4 5V7H7V4H5Z" fill={BLUE} /></svg>
    <svg width="16" height="16" viewBox="0 0 16 16" fill="none" className="ml-[6px]"><circle cx="6.5" cy="6.5" r="5" fill="#e6f2fc" stroke={BLUE} strokeWidth="1.6" /><path d="M10 10L15 15" stroke={BLUE} strokeWidth="2.4" /></svg>
    <CaretUp className="ml-[2px]" />
    <svg width="16" height="12" viewBox="0 0 16 12" className="ml-[5px]"><path d="M16 2L6 9L8 11H0L2 4L4 6L14 0Z" fill={BLUE} /></svg>
    <svg width="16" height="12" viewBox="0 0 16 12" className="ml-[7px]"><path d="M0 10L10 3L8 1H16L14 8L12 6L2 12Z" fill="#7f94a8" /></svg>
  </div>
);

const TitleBar = () => (
  <div className="h-[30px] flex items-center shrink-0 relative">
    <div className="w-[521px] flex items-center shrink-0 pl-[4px]">
      <svg width="15" height="15" viewBox="0 0 15 15" fill="none"><path d="M1 3L14 1L10 14ZM3 6L12 4M5 9L11 7M7 12L10 10" stroke="#9fcaf0" /></svg>
      <span className="ml-[5px] w-px h-[14px] bg-[#7f9fc0]" />
      <svg width="15" height="13" viewBox="0 0 15 13" className="ml-[7px]"><path d="M1 2H6L7 4H13V12H1Z" fill="#e9a83f" /><path d="M1 12L3 6H15L13 12Z" fill="#f4c060" /></svg>
      <svg width="13" height="13" viewBox="0 0 13 13" className="ml-[9px]"><rect width="13" height="13" rx="1" fill="#2f8fdc" /><rect x="3" y="7" width="7" height="6" fill="#eaf3fb" /></svg>
      <svg width="16" height="14" viewBox="0 0 16 14" fill="none" className="ml-[9px]"><path d="M2 3H9C14 3 15 11 8 13" stroke="#6fb4ea" strokeWidth="2.4" /><path d="M6 0L1 3.5L6 7" stroke="#6fb4ea" strokeWidth="2" /></svg>
      <CaretDown className="ml-[3px] border-t-[#c8d6e6]" />
      <svg width="16" height="14" viewBox="0 0 16 14" fill="none" className="ml-[6px]"><path d="M14 3H7C2 3 1 11 8 13" stroke="#d8e4f0" strokeWidth="2.4" /><path d="M10 0L15 3.5L10 7" stroke="#d8e4f0" strokeWidth="2" /></svg>
      <CaretDown className="ml-[8px] border-t-[#7f9fc0]" />
      <svg width="7" height="8" viewBox="0 0 7 8" fill="none" className="ml-[13px]"><path d="M1 1H6M1 3.5L3.5 7L6 3.5Z" stroke="#7f9fc0" /></svg>
    </div>
    <span className="pt-[1px] text-[11.5px] text-[#e8eef5] whitespace-nowrap">A:Static Structural - Design1 - SpaceClaim</span>
    <div className="ml-auto flex items-center mr-[11px]">
      <svg width="11" height="11" viewBox="0 0 11 11"><rect x="1" y="4" width="9" height="2" fill="#fff" /></svg>
      <svg width="11" height="11" viewBox="0 0 11 11" fill="none" className="ml-[16px]"><rect x=".7" y="1.3" width="9.6" height="8.6" stroke="#fff" strokeWidth="1.3" /><path d="M1 1.5H10" stroke="#fff" strokeWidth="2" /></svg>
      <svg width="11" height="11" viewBox="0 0 11 11" fill="none" className="ml-[15px]"><path d="M1 1L10 10M10 1L1 10" stroke="#fff" strokeWidth="1.7" /></svg>
    </div>
  </div>
);

const tabs = ['Insert', 'Detail', 'Display', 'Measure', 'Sheet Metal', 'Repair', 'Prepare', 'Workbench', 'KeyShot'];

const TabRow = () => (
  <div className="h-[21px] flex items-end text-[10px] text-[#e6edf5] shrink-0">
    <span className="ml-[22px] w-[40px] h-[21px] leading-[22px]">File</span>
    <span className="w-[54px] h-[21px] bg-[#f1f1f1] text-[#3c6ea3] text-center leading-[22px]">Design</span>
    <span className="flex ml-[11px] gap-[23.7px]">
      {tabs.map(t => <span key={t} className="h-[21px] leading-[22px] whitespace-nowrap">{t}</span>)}
    </span>
    <div className="ml-auto flex items-center h-[21px] mr-[8px]">
      <span className="inline-block w-0 h-0 border-x-[4px] border-x-transparent border-b-[4px] border-b-white" />
      <span className="ml-[12px] w-[14px] h-[14px] rounded-full bg-[#3d6fc4] border border-[#c8d8ee] text-white text-[10px] font-bold text-center leading-[12px]">?</span>
    </div>
  </div>
);

const TaskSlot: React.FC<{ active?: boolean; children: React.ReactNode }> = ({ active, children }) => (
  <span className={`w-[46px] h-[22px] flex justify-center pt-[9px] shrink-0 ${active ? 'bg-[#2c2c2e]' : ''}`}>{children}</span>
);

const AnsysBadge = () => (
  <svg width="22" height="24" viewBox="0 0 22 24" className="shrink-0"><path d="M3 0H19C21 0 22 2 22 4V24H0V4C0 2 1 0 3 0Z" fill="#f5c518" /><path d="M3 22L9 3H13L19 22H15L11 9L7 22Z" fill="#111" /></svg>
);

const Taskbar = () => (
  <div className="h-[22px] bg-[#05080e] flex overflow-hidden shrink-0">
    <div className="w-[39px] shrink-0 flex justify-center pl-[4px] pt-[11px]">
      <svg width="15" height="15" viewBox="0 0 15 15" className="shrink-0"><path d="M0 2L6.5 1V7H0ZM7.5 1L15 0V7H7.5ZM0 8H6.5V14L0 13ZM7.5 8H15V15L7.5 14Z" fill="#fff" /></svg>
    </div>
    <div className="w-[317px] h-[22px] bg-[#373739] pl-[8px] pt-[11px] text-[12.3px] leading-[14px] text-[#9a9a9a] font-['Open_Sans',sans-serif] shrink-0">Search Windows</div>
    <TaskSlot><svg width="20" height="16" viewBox="0 0 20 16" fill="none"><rect x="5" y="0.5" width="10" height="15" stroke="#ddd" strokeWidth="1.3" /><path d="M2 3V13M18 3V13" stroke="#ddd" strokeWidth="1.2" /></svg></TaskSlot>
    <TaskSlot><svg width="20" height="16" viewBox="0 0 20 16"><path d="M0 0H8L10 3H20V16H0Z" fill="#f5cf72" /><rect x="2" y="8" width="16" height="8" fill="#4aa3df" /></svg></TaskSlot>
    <TaskSlot>
      <svg width="20" height="20" viewBox="0 0 20 20" className="shrink-0"><circle cx="10" cy="10" r="10" fill="#e04a3a" /><path d="M10 10L19 7A10 10 0 0 1 10 20Z" fill="#f6c632" /><path d="M10 10L10 20A10 10 0 0 1 1 5Z" fill="#39a852" /><circle cx="10" cy="10" r="4.5" fill="#4a88e8" stroke="#fff" strokeWidth="1.4" /></svg>
    </TaskSlot>
    <TaskSlot><svg width="20" height="18" viewBox="0 0 20 18"><rect x="8" y="3" width="12" height="9" fill="#dfeaf7" /><path d="M0 2L11 0V18L0 16Z" fill="#0f6fc6" /><circle cx="5.5" cy="9" r="2.6" fill="none" stroke="#fff" strokeWidth="1.5" /></svg></TaskSlot>
    <TaskSlot><AnsysBadge /></TaskSlot>
    <TaskSlot><svg width="20" height="18" viewBox="0 0 20 18"><rect x="8" y="2" width="12" height="14" fill="#f4d5c8" /><path d="M0 2L12 0V18L0 16Z" fill="#d24726" /><path d="M4 13V5H7.5C9 5 9 9 7.5 9H4" fill="none" stroke="#fff" strokeWidth="1.3" /></svg></TaskSlot>
    <TaskSlot active><AnsysBadge /></TaskSlot>
    <div className="ml-auto flex shrink-0 pr-[12px] text-[#dcdcdc]">
      <span className="w-[30px] flex justify-center pt-[13px]"><svg width="11" height="6" viewBox="0 0 11 6" fill="none"><path d="M.5 5.5L5.5 .5L10.5 5.5" stroke="#ddd" /></svg></span>
      <span className="w-[30px] flex justify-center pt-[8px]"><svg width="16" height="14" viewBox="0 0 16 14"><path d="M4 5H14V14H4Z" fill="#eee" /><path d="M1 3H5M5 1V5" stroke="#ddd" /></svg></span>
      <span className="w-[30px] flex justify-center pt-[11px]"><svg width="16" height="14" viewBox="0 0 16 14" fill="none"><path d="M1 1H6V7H1ZM6 1H14V14H8M3.5 7V14" stroke="#ddd" /></svg></span>
      <span className="w-[30px] flex justify-center pt-[11px]"><svg width="14" height="14" viewBox="0 0 14 14" fill="none"><path d="M1 5H4L7 2V13L4 10H1ZM9 5C10 7 10 8 9 10M11 4C12.5 6 12.5 9 11 11" stroke="#aaa" /></svg></span>
      <span className="w-[32px] flex justify-center pt-[11px]"><svg width="20" height="14" viewBox="0 0 20 14" fill="none"><rect x=".5" y=".5" width="19" height="13" stroke="#ddd" /><path d="M2 3H18M2 6H18M2 9H18" stroke="#ddd" strokeDasharray="1 1" /></svg></span>
      <span className="w-[68px] text-center text-[11px] leading-[21px] font-['Open_Sans',sans-serif]">9:44 AM</span>
      <span className="w-[34px] flex justify-center pt-[10px]"><svg width="15" height="15" viewBox="0 0 15 15" fill="none"><path d="M.5 15V.5H14.5V15" stroke="#ddd" /></svg></span>
    </div>
  </div>
);

// strip of the desktop that shows between the page edge and the window
const DesktopEdge = () => (
  <div className="w-[8px] h-full flex flex-col shrink-0">
    <div className="h-[458px] bg-[#e8eaee] border-l-2 border-l-[#02142c] border-r border-r-[#c5d2e2] flex flex-col shrink-0">
      <div className="h-[20px] bg-[#2a2410]" />
      <div className="h-[20px]" />
      <div className="h-[26px] bg-[#e5dfc4]" />
      <div className="h-[10px] bg-[#666]" />
      <div className="h-[14px] border border-[#aaa]" />
      <div className="h-[280px]" />
      <div className="h-[24px] bg-[#c9c9c9]" />
      <div className="h-[16px]" />
      <div className="h-[18px] border border-[#777]" />
      <div className="h-[6px] bg-[#5d8fd0]" />
    </div>
    <div className="pt-[60px] text-[11px] leading-[12px] text-[#e8e8e8] pl-[1px]">A</div>
  </div>
);

export default function App() {
  return (
    <div className="w-[1280px] h-[720px] overflow-hidden bg-white flex font-['Liberation_Sans',Arial,sans-serif]">
      <div className="w-[55px] shrink-0" />
      <div className="w-[1173px] h-full flex flex-col bg-[#02142c] shrink-0">
        <div className="flex-1 min-h-0 flex">
          <DesktopEdge />
          <div className="w-[1153px] h-full flex flex-col bg-[#2a5b8c] shrink-0">
            <TitleBar />
            <TabRow />
            <Ribbon />
            <div className="flex-1 min-h-0 flex bg-white">
              <LeftPanel />
              <div className="ml-[3px] mt-[3px] flex flex-col w-[913px]">
                <Viewport />
                <TabStrip />
              </div>
            </div>
            <StatusBar />
          </div>
        </div>
        <Taskbar />
      </div>
    </div>
  );
}
